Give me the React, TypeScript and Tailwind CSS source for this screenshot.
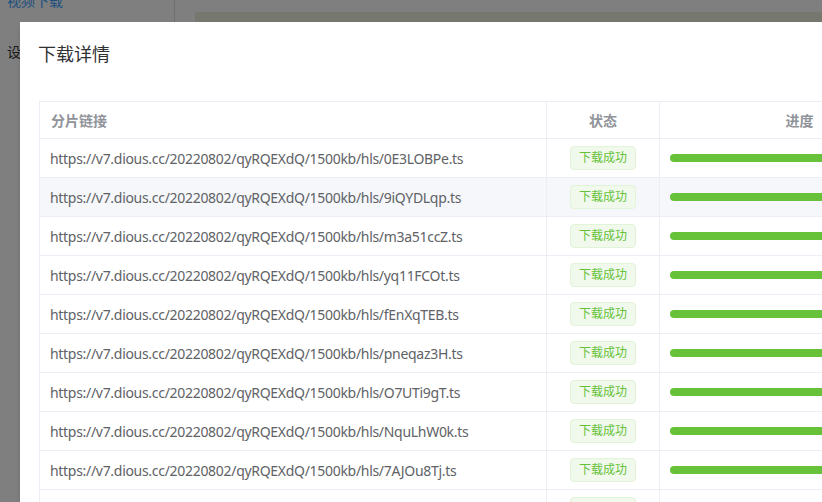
import React from 'react'

const base = 'https://v7.dious.cc/20220802/qyRQEXdQ/1500kb/hls/'
const parts = [
  '0E3LOBPe.ts',
  '9iQYDLqp.ts',
  'm3a51ccZ.ts',
  'yq11FCOt.ts',
  'fEnXqTEB.ts',
  'pneqaz3H.ts',
  'O7UTi9gT.ts',
  'NquLhW0k.ts',
  '7AJOu8Tj.ts',
  'Xk2mPq9L.ts',
]

export default function App() {
  return (
    <div
      className="relative w-[822px] h-[502px] overflow-hidden bg-white"
      style={{ fontFamily: '"Noto Sans", "Noto Sans CJK SC", sans-serif' }}
    >
      {/* page behind the dialog */}
      <div className="flex h-full">
        <div className="w-[175px] shrink-0 border-r border-[#dcdfe6] px-[7px]">
          <div className="-mt-[10px] text-[14px] text-[#409eff]">视频下载</div>
          <div className="mt-[30px] text-[14px] text-[#303133]">设置</div>
        </div>
        <div className="flex-1 pl-[20px] pt-[12px]">
          <div className="h-[30px] bg-[#eceede]"></div>
        </div>
      </div>

      {/* overlay */}
      <div className="absolute inset-0 bg-black/50"></div>

      {/* dialog */}
      <div className="absolute left-[20px] top-[22px] w-[938px] h-[600px] bg-white shadow-md">
        <div className="px-[18px] pt-[20px] text-[18px] leading-[24px] text-[#303133]">下载详情</div>
        <div className="px-[19px] pt-[35px]">
          <div className="border-l border-t border-[#ebeef5] text-[14px]">
            <div className="flex h-[37px] border-b border-[#ebeef5] font-bold text-[#909399]">
              <div className="w-[507px] shrink-0 flex items-center px-[11px] border-r border-[#ebeef5]">分片链接</div>
              <div className="w-[113px] shrink-0 flex items-center justify-center border-r border-[#ebeef5]">状态</div>
              <div className="flex-1 flex items-center justify-center">进度</div>
            </div>
            {parts.map((p, i) => (
              <div
                key={p}
                className={
                  'flex h-[39px] border-b border-[#ebeef5] text-[#606266] ' +
                  (i === 1 ? 'bg-[#f5f7fa]' : 'bg-white')
                }
              >
                <div className="w-[507px] shrink-0 flex items-center px-[10px] border-r border-[#ebeef5] whitespace-nowrap tracking-[-0.3px]">
                  {base + p}
                </div>
                <div className="w-[113px] shrink-0 flex items-center justify-center border-r border-[#ebeef5]">
                  <span className="h-[24px] px-[8px] leading-[22px] text-[12px] rounded-[4px] border border-[#e1f3d8] bg-[#f0f9eb] text-[#67c23a]">
                    下载成功
                  </span>
                </div>
                <div className="flex-1 flex items-center px-[10px]">
                  <div className="h-[8px] w-full rounded-full bg-[#67c23a]"></div>
                </div>
              </div>
            ))}
          </div>
        </div>
      </div>
    </div>
  )
}
